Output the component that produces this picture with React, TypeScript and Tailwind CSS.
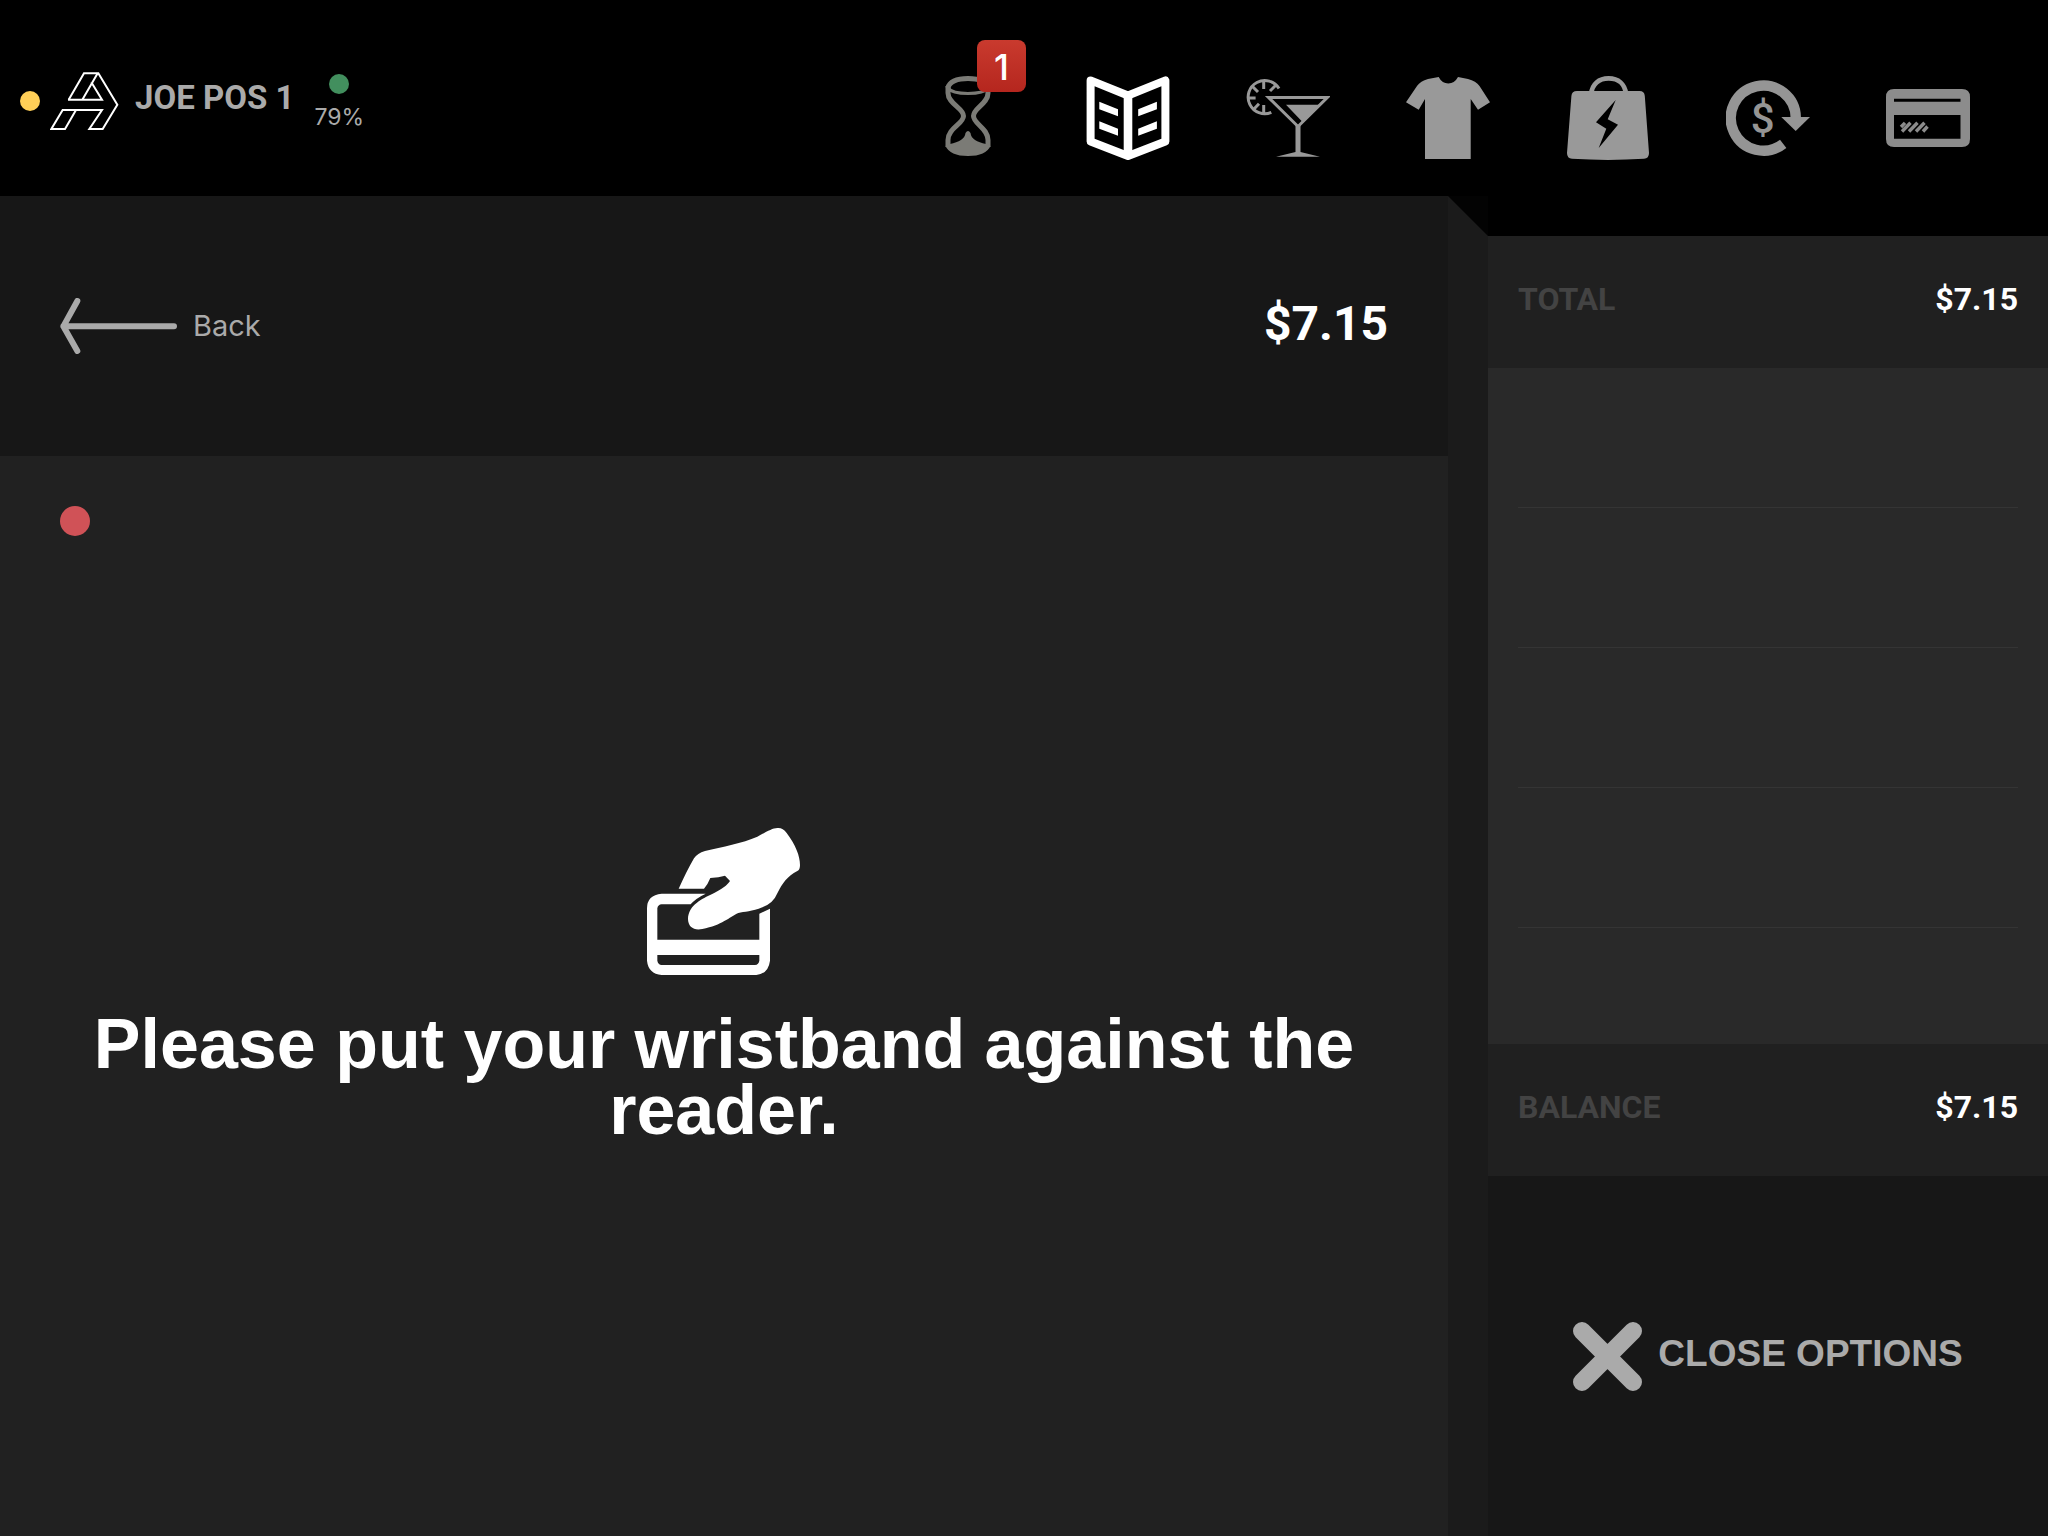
import type { ReactNode } from "react";

type NavItem = {
  id: string;
  label: string;
  icon: ReactNode;
  color: string;
  badge?: number;
};

function HourglassIcon() {
  return (
    <svg viewBox="0 0 84 84" className="size-[84px]" fill="none" stroke="currentColor">
      <path d="M21.8 12C24 5 32 2.6 42 2.6S60 5 62.2 12" strokeWidth="5" />
      <path d="M22 12C25 16 33 17.5 42 17.5S59 16 62 12" strokeWidth="3" />
      <path
        d="M22 10V17C22 28 37.5 32 37.5 40C37.5 48 22 52 22 64V71M62 10V17C62 28 47.5 32 47.5 40C47.5 48 62 52 62 64V71"
        strokeWidth="5"
      />
      <path
        d="M24 68C33 66 39 63 39.5 57Q42 53 44.5 57C45 63 51 66 60 68L64.5 70Q60 80 42 80Q24 80 19.5 70Z"
        fill="currentColor"
        stroke="none"
      />
    </svg>
  );
}

function MenuBookIcon() {
  return (
    <svg viewBox="0 0 84 84" className="size-[84px]" fill="none" stroke="currentColor">
      <path d="M4.6 4.4L42 19.5L79.4 4.4V65.5L42 80L4.6 65.5Z" strokeWidth="8" strokeLinejoin="round" />
      <path d="M42 19V79" strokeWidth="8.6" />
      <path
        d="M13.3 25.7L32 33.3V40.3L13.3 33.2ZM13.3 45.2L32 52.8V59.8L13.3 52.7ZM70.9 25.7L52.2 33.3V40.3L70.9 33.2ZM70.9 45.2L52.2 52.8V59.8L70.9 52.7Z"
        fill="currentColor"
        stroke="none"
      />
    </svg>
  );
}

function CocktailIcon() {
  return (
    <svg viewBox="0 0 84 84" className="size-[84px]" fill="none" stroke="currentColor">
      <path d="M33 12.6A16.6 16.6 0 1 0 25.3 36.4" strokeWidth="3" />
      <path
        d="M17.7 5V13M2 22H9.6M17.7 29V37M6.5 10.5L12 16M29.5 9.5L24 15M7.5 33.5L13 27.7"
        strokeWidth="3"
      />
      <path d="M22.5 21.4H81.5L52 50.5Z" strokeWidth="3" />
      <path d="M40 28.7H75L57 46.5ZM49.5 49H54.5V76L74 80.7H30L49.5 76Z" fill="currentColor" stroke="none" />
    </svg>
  );
}

function ShirtIcon() {
  return (
    <svg viewBox="0 0 84 84" className="size-[84px]" fill="currentColor">
      <path d="M32.7 1Q36 7.5 42.3 7.5Q48.5 7.5 52 1L62 3Q70 5 73.5 10L84 26.3L72 33.7L64.7 23V83H19V23L12.7 33.7L0 26.3L11 10Q14.5 5 22 3Z" />
    </svg>
  );
}

function BagIcon() {
  return (
    <svg viewBox="0 0 84 84" className="size-[84px]" fill="currentColor">
      <path d="M25.2 18C26 8 33 2.4 42.6 2.4S59 8 60 18" fill="none" stroke="currentColor" strokeWidth="4.8" />
      <path
        fillRule="evenodd"
        d="M11 15H73.5Q78.4 15 78.8 20L83 77Q83 82.5 78 82.8Q42 85 6 82.8Q1 82.5 1 77L5.4 20Q5.8 15 11 15ZM49.7 24L30 46.3L40.3 52.7L32.7 72L52 48.7L41.7 43.3Z"
      />
    </svg>
  );
}

function RefundIcon() {
  return (
    <svg viewBox="0 0 84 84" className="size-[84px]" fill="currentColor">
      <path d="M57.2 67.8A32.5 32.5 0 1 1 69.8 42" fill="none" stroke="currentColor" strokeWidth="10.4" />
      <path d="M55.3 41H84L69.7 55Z" />
      <text x="36.7" y="57" textAnchor="middle" fontSize="42" className="font-['Roboto',sans-serif] font-medium">
        $
      </text>
    </svg>
  );
}

function CardIcon() {
  return (
    <svg viewBox="0 0 84 84" className="size-[84px]" fill="currentColor">
      <path
        fillRule="evenodd"
        d="M8 13H76Q84 13 84 21V63Q84 71 76 71H8Q0 71 0 63V21Q0 13 8 13ZM8 22.7V25.7H74.5V22.7ZM8 39V62.7H74.5V39Z"
      />
      <path
        d="M15 51L19 46.8M16 55.5L24.5 46.8M23 55.5L31.5 46.8M30 55.5L38.5 46.8M37 55.5L41.5 50.5"
        stroke="currentColor"
        strokeWidth="3.4"
      />
    </svg>
  );
}

function Logo() {
  return (
    <svg viewBox="150 94 207 174" className="h-[58px] w-[69px]" fill="none" stroke="#fff" strokeWidth="6">
      <path d="M206 177L252 98H295L352 192L308 265H268L306 208H188L154 265H195L228 208" />
      <path d="M204 177H306L274 125M293 98L247 177" />
    </svg>
  );
}

function HandCardIcon() {
  return (
    <svg viewBox="84 81 462 444" className="h-[148px] w-[154px]" fill="#fff">
      <path
        fillRule="evenodd"
        d="M260 281H128Q84 285 84 325V482Q88 521 128 525H412Q448 521 453 482V326L421 341V419H115V325Q117 314 128 313H215Q230 295 260 281ZM115 465H421V482Q419 494 408 495H128Q117 494 115 482Z"
      />
      <path d="M179 266C195 232 210 200 225 175Q235 160 258 153C310 140 370 130 415 110C440 97 462 82 478 84Q492 84 503 99C530 135 543 168 543 195Q543 210 535 213C505 228 490 250 475 280Q463 310 430 322C400 335 375 335 358 339C330 352 310 375 250 387C225 393 207 380 207 357C208 320 240 300 275 284C310 268 325 255 333 243L318 227Q300 233 274 234Q267 252 255 266Z" />
    </svg>
  );
}

const navItems: NavItem[] = [
  { id: "pending", label: "Pending orders", icon: <HourglassIcon />, color: "text-[#7b7b76]", badge: 1 },
  { id: "menu", label: "Menu", icon: <MenuBookIcon />, color: "text-white" },
  { id: "drinks", label: "Drinks", icon: <CocktailIcon />, color: "text-[#999999]" },
  { id: "merch", label: "Merchandise", icon: <ShirtIcon />, color: "text-[#999999]" },
  { id: "quick", label: "Quick sale", icon: <BagIcon />, color: "text-[#999999]" },
  { id: "refund", label: "Refund", icon: <RefundIcon />, color: "text-[#959595]" },
  { id: "card", label: "Card", icon: <CardIcon />, color: "text-[#8c8c8c]" },
];

const emptyRows = [1, 2, 3, 4];

function SummaryRow({ label, value }: { label: string; value: string }) {
  return (
    <div className="flex h-[132px] items-center justify-between bg-[#202020] px-[30px] pb-1.5 text-[32px] font-bold">
      <span className="text-[#434343]">{label}</span>
      <span className="text-white">{value}</span>
    </div>
  );
}

export default function App() {
  return (
    <div className="flex min-h-screen flex-col bg-black font-['Roboto',sans-serif] text-white">
      <header className="flex h-[196px] shrink-0 items-start justify-between pr-10 pl-5">
        <div className="flex h-[196px] items-center">
          <span className="mt-1.5 size-5 rounded-full bg-[#ffcf57]" />
          <div className="mt-1.5 ml-2.5">
            <Logo />
          </div>
          <h1 className="ml-4 text-[33px] font-bold text-[#aaaaaa]">JOE POS 1</h1>
          <div className="ml-5 flex flex-col items-center gap-1.5 pt-3">
            <span className="size-5 rounded-full bg-[#428f5e]" />
            <span className="font-['Inter',sans-serif] text-[23px] text-[#aaaaaa]">79%</span>
          </div>
        </div>
        <nav className="flex">
          {navItems.map((item) => (
            <button
              key={item.id}
              type="button"
              aria-label={item.label}
              className={`relative flex h-[196px] w-40 justify-center pt-[76px] ${item.color}`}
            >
              {item.icon}
              {item.badge && (
                <span className="absolute top-10 left-[89px] flex h-[52px] w-[49px] items-center justify-center rounded-lg bg-linear-to-b from-[#c93a2e] to-[#b5261e] pt-0.5 font-['Inter',sans-serif] text-[36px] font-medium text-white">
                  {item.badge}
                </span>
              )}
            </button>
          ))}
        </nav>
      </header>

      <div className="flex flex-1">
        <main className="flex flex-1 flex-col bg-[#212121]">
          <div className="flex h-[260px] items-center justify-between bg-[#171717] px-[60px]">
            <button type="button" className="flex items-center gap-4 text-[#aaaaaa]">
              <svg
                viewBox="60 83 351 168"
                className="h-14 w-[117px]"
                fill="none"
                stroke="currentColor"
                strokeWidth="18"
                strokeLinecap="round"
                strokeLinejoin="round"
              >
                <path d="M112 92L70 168L112 242M70 168H402" />
              </svg>
              <span className="font-['Inter',sans-serif] text-[29px]">Back</span>
            </button>
            <span className="pb-1 text-[48px] font-bold">$7.15</span>
          </div>
          <div className="flex flex-1 flex-col px-[60px] pt-[50px]">
            <span className="size-[30px] rounded-full bg-[#d05257]" />
            <div className="mt-[291px] flex flex-col items-center">
              <HandCardIcon />
              <p className="mt-9 text-center font-['Liberation_Sans',sans-serif] text-[70px] leading-[66px] font-bold">
                Please put your wristband against the reader.
              </p>
            </div>
          </div>
        </main>

        <div className="w-10 shrink-0 bg-[#1b1b1b]">
          <svg viewBox="0 0 40 40" className="size-10" fill="#030303">
            <path d="M0 0H40V40Z" />
          </svg>
        </div>

        <aside className="flex w-[560px] shrink-0 flex-col pt-10">
          <SummaryRow label="TOTAL" value="$7.15" />
          <ul className="h-[676px] bg-[#292929] px-[30px]">
            {emptyRows.map((row) => (
              <li key={row} className="h-[140px] border-b border-[#343434]" />
            ))}
          </ul>
          <SummaryRow label="BALANCE" value="$7.15" />
          <div className="flex flex-1 items-center justify-center bg-[#171717]">
            <button type="button" className="flex items-center gap-4 text-[#aaaaaa]">
              <svg
                viewBox="0 0 69 69"
                className="size-[69px]"
                stroke="currentColor"
                strokeWidth="18"
                strokeLinecap="round"
              >
                <path d="M9 9L60 60M60 9L9 60" />
              </svg>
              <span className="pb-1 font-['Liberation_Sans',sans-serif] text-[37px] font-bold">CLOSE OPTIONS</span>
            </button>
          </div>
        </aside>
      </div>
    </div>
  );
}
